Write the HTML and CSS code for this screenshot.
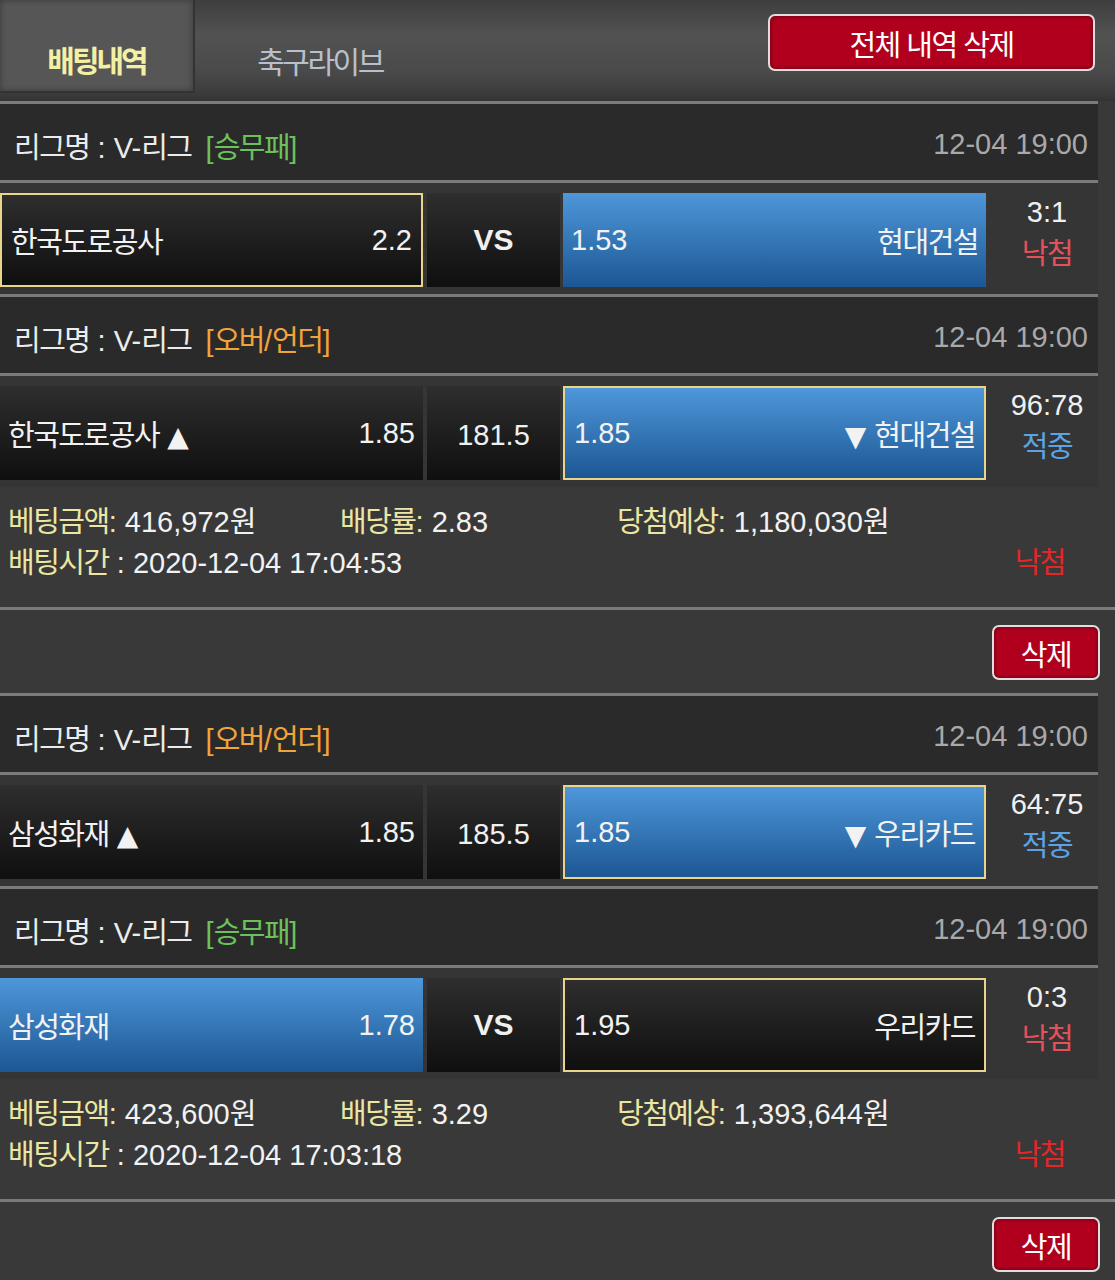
FILE: index.html
```html
<!DOCTYPE html>
<html lang="ko">
<head>
<meta charset="utf-8">
<title>배팅내역</title>
<link rel="stylesheet" href="styles.css">
</head>
<body>
<div class="topbar">
  <div class="tab active"><span class="ko">배팅내역</span></div>
  <div class="tab"><span class="ko">축구라이브</span></div>
  <div class="spacer"></div>
  <button class="btn-all"><span class="ko">전체 내역 삭제</span></button>
</div>

<div class="group">
  <div class="lg">
    <div><span class="ko">리그명</span> : V-<span class="ko">리그</span> <span class="tag g">[<span class="ko">승무패</span>]</span></div>
    <div class="time">12-04 19:00</div>
  </div>
  <div class="row">
    <div class="box dark sel"><span class="ko">한국도로공사</span><span>2.2</span></div>
    <div class="mid dark vs">VS</div>
    <div class="box blue"><span>1.53</span><span class="ko">현대건설</span></div>
    <div class="score"><div>3:1</div><div class="ko lose">낙첨</div></div>
  </div>
  <div class="lg">
    <div><span class="ko">리그명</span> : V-<span class="ko">리그</span> <span class="tag o">[<span class="ko">오버</span>/<span class="ko">언더</span>]</span></div>
    <div class="time">12-04 19:00</div>
  </div>
  <div class="row">
    <div class="box dark"><span><span class="ko">한국도로공사</span> <span class="tri">▲</span></span><span>1.85</span></div>
    <div class="mid dark line">181.5</div>
    <div class="box blue sel"><span>1.85</span><span><span class="tri">▼</span> <span class="ko">현대건설</span></span></div>
    <div class="score"><div>96:78</div><div class="ko win">적중</div></div>
  </div>
</div>
<div class="info">
  <div class="l1">
    <div><span class="lbl ko">베팅금액</span><span class="lbl">:</span> 416,972<span class="ko">원</span></div>
    <div><span class="lbl ko">배당률</span><span class="lbl">:</span> 2.83</div>
    <div><span class="lbl ko">당첨예상</span><span class="lbl">:</span> 1,180,030<span class="ko">원</span></div>
  </div>
  <div class="l2">
    <div><span class="lbl ko">배팅시간</span> : 2020-12-04 17:04:53</div>
    <div class="ko res">낙첨</div>
  </div>
</div>
<div class="sep"></div>
<div class="delrow"><button class="btn-del"><span class="ko">삭제</span></button></div>

<div class="group">
  <div class="lg">
    <div><span class="ko">리그명</span> : V-<span class="ko">리그</span> <span class="tag o">[<span class="ko">오버</span>/<span class="ko">언더</span>]</span></div>
    <div class="time">12-04 19:00</div>
  </div>
  <div class="row">
    <div class="box dark"><span><span class="ko">삼성화재</span> <span class="tri">▲</span></span><span>1.85</span></div>
    <div class="mid dark line">185.5</div>
    <div class="box blue sel"><span>1.85</span><span><span class="tri">▼</span> <span class="ko">우리카드</span></span></div>
    <div class="score"><div>64:75</div><div class="ko win">적중</div></div>
  </div>
  <div class="lg">
    <div><span class="ko">리그명</span> : V-<span class="ko">리그</span> <span class="tag g">[<span class="ko">승무패</span>]</span></div>
    <div class="time">12-04 19:00</div>
  </div>
  <div class="row">
    <div class="box blue"><span class="ko">삼성화재</span><span>1.78</span></div>
    <div class="mid dark vs">VS</div>
    <div class="box dark sel"><span>1.95</span><span class="ko">우리카드</span></div>
    <div class="score"><div>0:3</div><div class="ko lose">낙첨</div></div>
  </div>
</div>
<div class="info">
  <div class="l1">
    <div><span class="lbl ko">베팅금액</span><span class="lbl">:</span> 423,600<span class="ko">원</span></div>
    <div><span class="lbl ko">배당률</span><span class="lbl">:</span> 3.29</div>
    <div><span class="lbl ko">당첨예상</span><span class="lbl">:</span> 1,393,644<span class="ko">원</span></div>
  </div>
  <div class="l2">
    <div><span class="lbl ko">배팅시간</span> : 2020-12-04 17:03:18</div>
    <div class="ko res">낙첨</div>
  </div>
</div>
<div class="sep"></div>
<div class="delrow"><button class="btn-del"><span class="ko">삭제</span></button></div>
</body>
</html>
```

FILE: styles.css
```css
* { box-sizing: border-box; margin: 0; padding: 0; }
body {
  background: #393939;
  font-family: "Liberation Sans", "Noto Sans CJK KR", sans-serif;
  font-size: 29px;
  color: #f0f0f0;
  width: 1115px;
  overflow: hidden;
}
.ko { letter-spacing: -1.5px; }

.topbar {
  height: 101px;
  display: flex;
  align-items: flex-start;
  background: linear-gradient(#3e3e3e 0%, #525252 35%, #4a4a4a 70%, #3c3c3c 92%, #333 100%);
}
.tab {
  height: 93px;
  display: flex;
  align-items: center;
  justify-content: center;
  padding-top: 27px;
  font-size: 30px;
  color: #b9c0cc;
}
.tab:nth-child(2) { width: 250px; }
.tab:nth-child(2) .ko { letter-spacing: -2.5px; }
.tab.active {
  width: 195px;
  background: #565656;
  color: #f3f0a4;
  font-weight: bold;
  border-right: 2px solid #333;
  border-bottom: 2px solid #333;
  box-shadow: inset 0 0 6px rgba(0,0,0,0.35);
}
.tab.active .ko { letter-spacing: -3px; }
.spacer { flex: 1; }
.btn-all {
  margin: 14px 20px 0 0;
  width: 327px;
  height: 57px;
  background: #b1001d;
  border: 2px solid #e2dcdc;
  border-radius: 7px;
  color: #fff;
  font-family: inherit;
  font-size: 29px;
  box-shadow: inset 0 0 4px rgba(0,0,0,0.5);
}
.btn-all .ko { letter-spacing: -1.5px; }

.group { width: 1098px; }
.lg {
  height: 82px;
  border-top: 3px solid #7b7b7b;
  border-bottom: 3px solid #7b7b7b;
  background: #2a2a2a;
  display: flex;
  align-items: center;
  justify-content: space-between;
  padding: 5px 10px 0 14px;
  color: #ececec;
}
.lg .time { color: #a9a9a9; }
.tag.g { color: #6cc25a; margin-left: 6px; }
.tag.o { color: #f0a43a; margin-left: 6px; }

.row {
  height: 111px;
  display: flex;
  padding-top: 10px;
  background: #353535;
}
.box {
  width: 423px;
  height: 94px;
  display: flex;
  align-items: center;
  justify-content: space-between;
  padding: 0 8px;
  color: #f2f2f2;
}
.box.sel { border: 2px solid #e8d58a; padding: 0 9px; }
.dark { background: linear-gradient(#2e2e2e, #0f0f0f); }
.blue { background: linear-gradient(#4e97da, #1c5793); }
.mid {
  width: 133px;
  height: 94px;
  margin: 0 3px 0 4px;
  display: flex;
  align-items: center;
  justify-content: center;
}
.mid.vs { font-weight: bold; font-size: 30px; }
.mid.line { padding-top: 5px; }
.tri { font-family: "DejaVu Sans", sans-serif; font-size: 28px; }
.score {
  width: 112px;
  margin-top: -2px;
  padding-left: 10px;
  text-align: center;
  line-height: 42px;
  color: #f0f0f0;
}
.score .lose { color: #e6505a; }
.score .win { color: #5ba3e2; }

.info {
  height: 120px;
  padding: 15px 50px 0 8px;
  line-height: 41px;
  color: #f2f2f2;
}
.lbl { color: #ece6a4; }
.l1 { display: grid; grid-template-columns: 332px 277px auto; }
.l2 { display: flex; justify-content: space-between; }
.res { color: #e32626; }

.sep { height: 3px; background: #7b7b7b; }
.delrow {
  height: 83px;
  display: flex;
  justify-content: flex-end;
  padding: 15px 15px 0 0;
}
.btn-del {
  width: 108px;
  height: 55px;
  background: #b1001d;
  border: 2px solid #e2dcdc;
  border-radius: 7px;
  color: #fff;
  font-family: inherit;
  font-size: 29px;
  box-shadow: inset 0 0 4px rgba(0,0,0,0.5);
}
```
